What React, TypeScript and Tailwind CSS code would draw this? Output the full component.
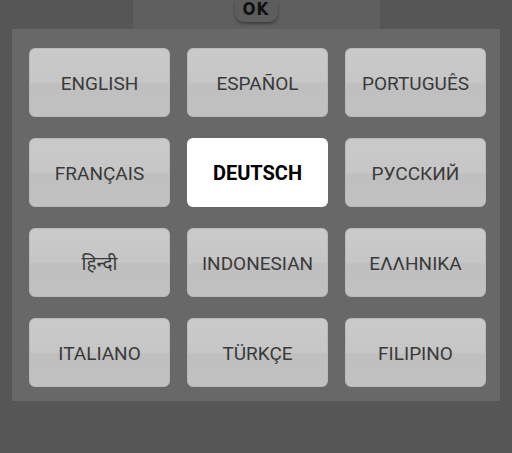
import { useState } from 'react'

const LANGS = [
  'ENGLISH',
  'ESPAÑOL',
  'PORTUGUÊS',
  'FRANÇAIS',
  'DEUTSCH',
  'РУССКИЙ',
  'हिन्दी',
  'INDONESIAN',
  'ΕΛΛΗΝΙΚΑ',
  'ITALIANO',
  'TÜRKÇE',
  'FILIPINO',
]

export default function App() {
  const [selected, setSelected] = useState('DEUTSCH')

  return (
    <div
      className="flex h-[453px] w-[512px] flex-col bg-[#565656]"
      style={{ fontFamily: 'Roboto, "Noto Sans", sans-serif' }}
    >
      {/* top bar with ok button */}
      <div className="flex justify-center">
        <div className="flex h-[29px] w-[247px] justify-center bg-[#5f5f5f]">
          <button className="flex h-[22px] w-[43px] items-start justify-center rounded-b-[9px] bg-[#5d5d5d] shadow-[0_2px_3px_rgba(0,0,0,0.35)]">
            <span
              className="text-[17px] font-bold leading-[19px] tracking-[1px] text-[#111]"
              style={{ fontFamily: '"DejaVu Sans Condensed", "DejaVu Sans", sans-serif' }}
            >
              OK
            </span>
          </button>
        </div>
      </div>

      {/* language grid */}
      <div className="ml-[12px] w-[488px] bg-[#686868] pb-[14px] pl-[17px] pr-[14px] pt-[19px]">
        <div className="grid grid-cols-3 gap-x-[17px] gap-y-[21px]">
          {LANGS.map((lang) => {
            const active = lang === selected
            return (
              <button
                key={lang}
                onClick={() => setSelected(lang)}
                className={
                  active
                    ? 'flex h-[69px] items-center justify-center rounded-[6px] bg-white pt-[1px] text-[20px] font-bold text-black'
                    : 'flex h-[69px] items-center justify-center rounded-[6px] border border-[#b9b9b9] bg-[linear-gradient(to_bottom,#cacaca_0%,#c6c6c6_50%,#bfbfbf_52%,#c1c1c1_100%)] pt-[3px] text-[19px] text-[#3a3a3a]'
                }
              >
                {lang}
              </button>
            )
          })}
        </div>
      </div>
    </div>
  )
}
